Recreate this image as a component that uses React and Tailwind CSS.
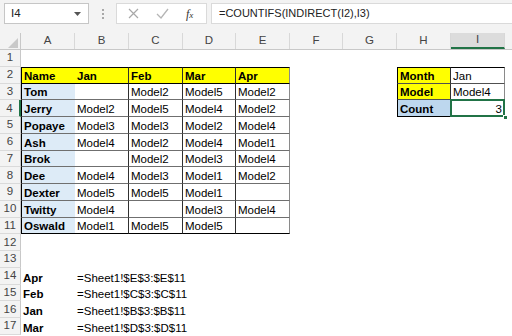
import React from "react";

const COLS = [
  { id: "A", w: "w-[54px]" },
  { id: "B", w: "w-[54px]" },
  { id: "C", w: "w-[54px]" },
  { id: "D", w: "w-[53px]" },
  { id: "E", w: "w-[54px]" },
  { id: "F", w: "w-[53px]" },
  { id: "G", w: "w-[54px]" },
  { id: "H", w: "w-[54px]" },
  { id: "I", w: "w-[54px]" },
];

const HEAD = ["Name", "Jan", "Feb", "Mar", "Apr"];

const PEOPLE = [
  ["Tom", "", "Model2", "Model5", "Model2"],
  ["Jerry", "Model2", "Model5", "Model4", "Model2"],
  ["Popaye", "Model3", "Model3", "Model2", "Model4"],
  ["Ash", "Model4", "Model2", "Model4", "Model1"],
  ["Brok", "", "Model2", "Model3", "Model4"],
  ["Dee", "Model4", "Model3", "Model1", "Model2"],
  ["Dexter", "Model5", "Model5", "Model1", ""],
  ["Twitty", "Model4", "", "Model3", "Model4"],
  ["Oswald", "Model1", "Model5", "Model5", ""],
];

const LOOKUP = [
  ["Month", "Jan"],
  ["Model", "Model4"],
  ["Count", "3"],
];

const NAMES = {
  14: ["Apr", "=Sheet1!$E$3:$E$11"],
  15: ["Feb", "=Sheet1!$C$3:$C$11"],
  16: ["Jan", "=Sheet1!$B$3:$B$11"],
  17: ["Mar", "=Sheet1!$D$3:$D$11"],
};

const ROWS = Array.from({ length: 17 }, (_, i) => i + 1);

// works out text + classes for one cell
function cellInfo(r, c) {
  let text = "";
  let cls = "";

  // main table A2:E11
  if (r >= 2 && r <= 11 && c <= 4) {
    text = r === 2 ? HEAD[c] : PEOPLE[r - 3][c];
    if (r === 2) cls += " bg-[#ffff00] font-bold border-t border-t-black border-b border-b-black";
    else if (c === 0) cls += " bg-[#ddebf7] font-bold border-b border-b-[#6f6f6f]";
    else cls += " border-b border-b-[#6f6f6f]";
    if (r === 11) cls += " border-b-black";
    if (c === 0) cls += " border-l border-l-black";
    if (c >= 1 && c <= 3) cls += " border-r border-r-[#303030]";
    if (c === 4) cls += " border-r border-r-[#8a8a8a]";
  }

  // lookup box H2:I4
  if (r >= 2 && r <= 4 && c >= 7) {
    text = LOOKUP[r - 2][c - 7];
    if (r === 2) cls += " border-t border-t-black";
    cls += " border-b border-b-[#505050]";
    if (c === 7) {
      cls += r === 4 ? " bg-[#bdd7ee]" : " bg-[#ffff00]";
      cls += " font-bold border-l border-l-black border-r border-r-[#303030]";
    } else {
      cls += " border-r border-r-[#8a8a8a]";
    }
    if (r === 4) cls += " border-b-black";
    if (r === 4 && c === 8) cls += " justify-end";
  }

  // named ranges list
  if (NAMES[r] && c <= 1) {
    text = NAMES[r][c];
    if (c === 0) cls += " font-bold";
  }

  return { text, cls };
}

function Check() {
  return (
    <svg width="13" height="11" viewBox="0 0 13 11" fill="none">
      <path d="M1 6l4 4 7-9" stroke="#b5b5b5" strokeWidth="1.3" />
    </svg>
  );
}

function Cross() {
  return (
    <svg width="11" height="11" viewBox="0 0 11 11" fill="none">
      <path d="M1 1l9 9M10 1l-9 9" stroke="#a8a8a8" strokeWidth="1.2" />
    </svg>
  );
}

function FormulaBar() {
  return (
    <div className="h-[33px] bg-[#f3f3f3] pt-[3px] pl-[4px] flex items-start">
      <div className="w-[85px] h-[21px] bg-white border border-[#c6c6c6] flex items-center justify-between pl-[6px] pr-[7px]">
        <span className="text-[11.5px] text-[#222]">I4</span>
        <svg width="7" height="4" viewBox="0 0 7 4">
          <path d="M0 0h7L3.5 4z" fill="#555" />
        </svg>
      </div>
      <div className="w-[27px] h-[21px] flex flex-col items-center justify-center gap-[2px]">
        <span className="w-[2px] h-[2px] bg-[#a8a8a8]" />
        <span className="w-[2px] h-[2px] bg-[#a8a8a8]" />
        <span className="w-[2px] h-[2px] bg-[#a8a8a8]" />
      </div>
      <div className="w-[91px] h-[21px] bg-white border border-[#dadada] flex items-center pl-[11px]">
        <Cross />
        <span className="ml-[17px]">
          <Check />
        </span>
        <span className="ml-[17px] font-['Liberation_Serif',serif] italic text-[12px] text-[#333] leading-none">
          f<span className="text-[9px]">x</span>
        </span>
      </div>
      <div className="flex-1 ml-[4px] h-[21px] bg-white border border-[#dadada] border-r-0 flex items-center pl-[7px]">
        <span className="text-[11px] text-[#222] whitespace-nowrap">=COUNTIFS(INDIRECT(I2),I3)</span>
      </div>
    </div>
  );
}

function ColumnHeaders() {
  return (
    <div className="flex h-[17px] bg-[#f3f3f3] border-b border-[#c8c8c8]">
      <div className="w-[21px] shrink-0 border-r border-[#c8c8c8] flex items-end justify-end pr-[2px] pb-[1px]">
        <svg width="10" height="10" viewBox="0 0 10 10">
          <path d="M10 0v10H0z" fill="#c9c9c9" />
        </svg>
      </div>
      {COLS.map((col) => (
        <div
          key={col.id}
          className={`${col.w} shrink-0 flex items-center justify-center text-[11.5px] text-[#444] border-r border-[#d8d8d8] ${
            col.id === "I" ? "bg-[#dcdcdc] border-b-2 border-b-[#217346] text-[#222]" : ""
          }`}
        >
          {col.id}
        </div>
      ))}
      <div className="flex-1" />
    </div>
  );
}

function Row({ r }) {
  return (
    <div className="flex h-[16.75px]">
      <div
        className={`w-[21px] shrink-0 bg-[#f3f3f3] border-b border-[#dadada] flex items-center justify-center text-[11.5px] text-[#444] ${
          r === 4 ? "bg-[#dcdcdc] border-r-2 border-r-[#217346] text-[#222]" : "border-r border-r-[#c8c8c8]"
        }`}
      >
        {r}
      </div>
      {COLS.map((col, c) => {
        const { text, cls } = cellInfo(r, c);
        const active = r === 4 && c === 8;
        return (
          <div
            key={col.id}
            className={`${col.w} shrink-0 relative flex items-end px-[2px] text-[11.5px] leading-[13px] text-black whitespace-nowrap ${cls}`}
          >
            <span className="relative">{text}</span>
            {active && (
              <>
                <div className="absolute -left-[1px] -top-[1px] -right-[1px] -bottom-[1px] border-2 border-[#217346]" />
                <div className="absolute -right-[4px] -bottom-[4px] w-[5px] h-[5px] bg-[#217346] border border-white" />
              </>
            )}
          </div>
        );
      })}
      <div className="flex-1" />
    </div>
  );
}

export default function App() {
  return (
    <div className="w-[512px] h-[336px] overflow-hidden bg-white font-['Liberation_Sans',Arial,sans-serif]">
      <FormulaBar />
      <ColumnHeaders />
      {ROWS.map((r) => (
        <Row key={r} r={r} />
      ))}
    </div>
  );
}
